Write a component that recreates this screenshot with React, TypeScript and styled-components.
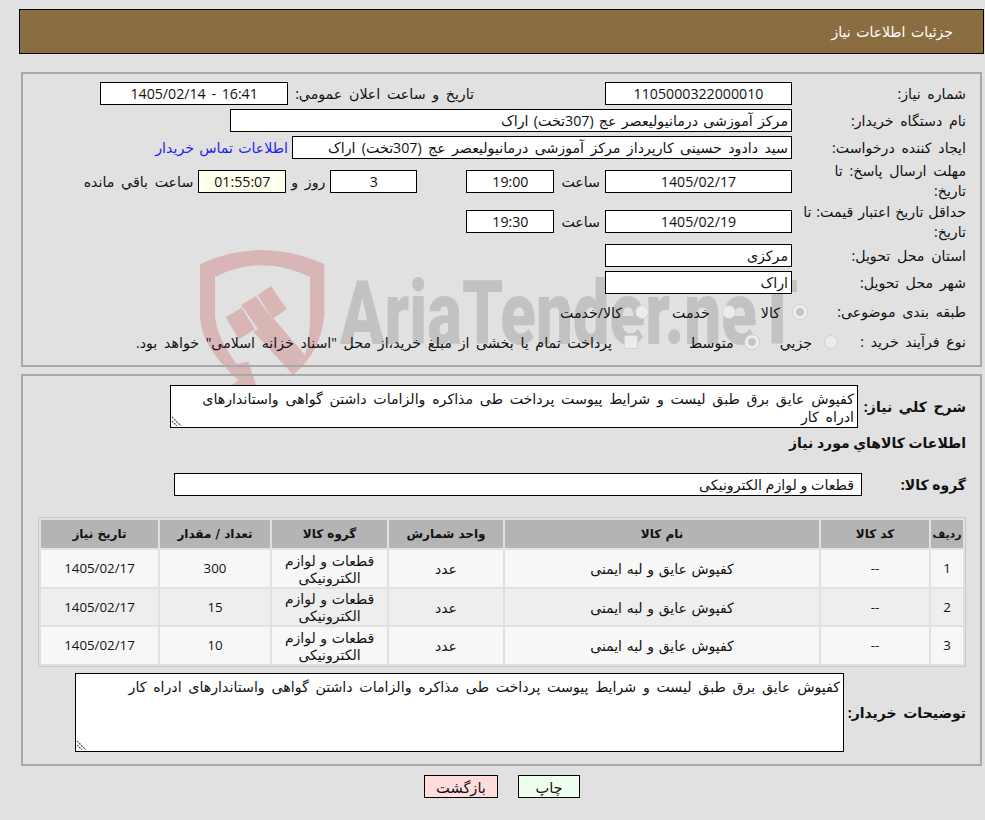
import styled, { createGlobalStyle } from "styled-components";

const GlobalStyle = createGlobalStyle`
  body {
    margin: 0;
    background-color: #e1e1e1;
    font-family: "Open Sans", "DejaVu Sans", Tahoma, sans-serif;
    font-size: 14.2px;
    color: #111;
  }
`;

const Page = styled.div`
  position: relative;
  direction: rtl;
  width: 985px;
  height: 820px;
  box-sizing: border-box;
  padding-top: 9px;
  overflow: hidden;
  word-spacing: 3px;
`;

const Watermark = styled.svg`
  position: absolute;
  left: 190px;
  top: 240px;
  width: 640px;
  height: 160px;
`;

const HeaderBar = styled.div`
  position: relative;
  box-sizing: border-box;
  height: 45px;
  margin-left: 19px;
  margin-right: 1px;
  padding-right: 30px;
  display: flex;
  align-items: center;
  background-color: #8b6d42;
  border: 1px solid #000;
  color: #fff;
  font-size: 14px;
  word-spacing: 2px;
`;

const Panel = styled.div<{ $top: number; $height: number }>`
  position: relative;
  box-sizing: border-box;
  height: ${({ $height }) => $height}px;
  margin: ${({ $top }) => $top}px 3px 0 21px;
  padding: 8px 14px 0 15px;
  border: 2px solid #a8a8a8;
`;

const Row = styled.div<{ $height: number; $gap?: number }>`
  display: flex;
  align-items: center;
  height: ${({ $height }) => $height}px;
  margin-bottom: ${({ $gap }) => $gap ?? 4}px;
`;

const Label = styled.div<{ $width?: number; $spread?: number }>`
  box-sizing: border-box;
  flex: none;
  width: ${({ $width }) => $width ?? 174}px;
  padding-left: 8px;
  line-height: 20px;
  word-spacing: ${({ $spread }) => $spread ?? 3}px;
`;

const Field = styled.div<{
  $width: number;
  $center?: boolean;
  $tint?: boolean;
  $after?: number;
  $spread?: number;
}>`
  flex: none;
  box-sizing: border-box;
  width: ${({ $width }) => $width}px;
  height: 23px;
  margin-left: ${({ $after }) => $after ?? 0}px;
  padding: 0 3px;
  line-height: 21px;
  text-align: ${({ $center }) => ($center ? "center" : "right")};
  word-spacing: ${({ $spread }) => $spread ?? 3}px;
  background-color: ${({ $tint }) => ($tint ? "#ffffee" : "#fff")};
  border: 1px solid #000;
  white-space: nowrap;
  overflow: hidden;
`;

const Text = styled.span<{ $after?: number; $before?: number }>`
  flex: none;
  margin-left: ${({ $after }) => $after ?? 0}px;
  margin-right: ${({ $before }) => $before ?? 0}px;
  white-space: nowrap;
`;

const ContactLink = styled.a`
  margin-right: 4px;
  color: #2222ee;
  text-decoration: none;
  white-space: nowrap;
  word-spacing: 1.5px;
`;

const Radio = styled.input.attrs({ type: "radio", disabled: true })<{ $after: number }>`
  appearance: none;
  flex: none;
  box-sizing: border-box;
  width: 14px;
  height: 14px;
  margin: 0 0 0 ${({ $after }) => $after}px;
  border-radius: 50%;
  border: 1px solid #d2d2d2;
  background-color: #ececec;
  &:checked {
    border: 3px solid #f0f0f0;
    outline: 1px solid #cfcfcf;
    background-color: #c4c4c4;
  }
`;

const Check = styled.input.attrs({ type: "checkbox", disabled: true })`
  appearance: none;
  flex: none;
  box-sizing: border-box;
  width: 14px;
  height: 14px;
  margin: 0 0 0 12px;
  border-radius: 2px;
  border: 1px solid #d2d2d2;
  background-color: #ececec;
`;

const BoldLabel = styled.div<{ $width: number; $spread?: number }>`
  flex: none;
  width: ${({ $width }) => $width}px;
  font-size: 14px;
  font-weight: 700;
  word-spacing: ${({ $spread }) => $spread ?? 3}px;
`;

const AreaBox = styled.div`
  position: relative;
  flex: none;
`;

const Area = styled.textarea<{ $width: number; $height: number }>`
  box-sizing: border-box;
  display: block;
  width: ${({ $width }) => $width}px;
  height: ${({ $height }) => $height}px;
  padding: 4px 3px 0;
  background-color: #fff;
  border: 1px solid #000;
  border-radius: 0;
  outline: none;
  resize: none;
  overflow: hidden;
  font-family: inherit;
  font-size: 14.2px;
  line-height: 18px;
  word-spacing: 3px;
  color: #111;
`;

const Grip = styled.svg`
  position: absolute;
  left: 2px;
  bottom: 2px;
  width: 10px;
  height: 10px;
`;

const SectionTitle = styled.div`
  height: 20px;
  margin: 5px 0 20px;
  font-size: 14px;
  font-weight: 700;
  line-height: 20px;
  word-spacing: 0;
`;

const ItemsTable = styled.table`
  table-layout: fixed;
  width: 928px;
  margin: 21px 0 6px;
  border: 1px solid #c8c8c8;
  border-spacing: 2px;
  border-collapse: separate;
`;

const Th = styled.th<{ $width: number }>`
  width: ${({ $width }) => $width}px;
  height: 28px;
  padding: 0;
  background-color: #b4b4b4;
  font-family: "DejaVu Sans", sans-serif;
  font-size: 12px;
  font-weight: 700;
  text-align: center;
  word-spacing: 0;
  &:first-child {
    font-size: 11px;
  }
`;

const Tr = styled.tr`
  &:nth-child(odd) td {
    background-color: #f7f7f7;
    height: 37px;
  }
  &:nth-child(even) td {
    background-color: #eeeeee;
    height: 36px;
  }
`;

const Td = styled.td<{ $num?: boolean }>`
  padding: 0 4px;
  font-size: ${({ $num }) => ($num ? 13.3 : 14)}px;
  line-height: 17px;
  text-align: center;
  word-spacing: 1px;
`;

const Actions = styled.div`
  display: flex;
  justify-content: center;
  gap: 20px;
  margin: 9px 0 0 19px;
`;

const Button = styled.button<{ $bg: string; $width: number }>`
  box-sizing: border-box;
  width: ${({ $width }) => $width}px;
  height: 23px;
  padding: 0;
  background-color: ${({ $bg }) => $bg};
  border: 1px solid #000;
  font-family: inherit;
  font-size: 14.6px;
  color: #111;
`;

const summary =
  "کفپوش عایق برق طبق لیست و شرایط پیوست پرداخت طی مذاکره والزامات داشتن گواهی واستاندارهای ادراه کار";

const items = [
  { row: "1", amount: "300" },
  { row: "2", amount: "15" },
  { row: "3", amount: "10" },
];

function ResizeGrip() {
  return (
    <Grip viewBox="0 0 10 10" aria-hidden="true">
      <path d="M0 1 L9 10 M0 5 L5 10" stroke="#555" strokeWidth="1.2" strokeDasharray="2 1" fill="none" />
    </Grip>
  );
}

function App() {
  return (
    <Page>
      <GlobalStyle />
      <Watermark viewBox="0 0 1920 480" aria-hidden="true">
        <g fill="#d8b6b6">
          <path d="M30,72 Q215,-12 403,72 L403,225 Q395,330 310,405 L345,345 Q360,300 360,225 L360,111 Q215,40 75,111 L75,225 Q78,290 140,372 L175,365 L200,440 L120,440 L145,420 Q30,320 30,225 Z" />
          <path d="M190,275 L250,235 L345,345 L310,405 Z" />
          <path d="M107,232 L155,203 L195,268 L147,298 Z" />
          <path d="M153,195 L197,168 L250,240 L205,268 Z" />
          <path d="M203,165 L243,138 L290,207 L248,237 Z" />
        </g>
        <text
          x="450"
          y="312"
          direction="ltr"
          fill="#c2c2c2"
          fontFamily="Roboto, sans-serif"
          fontSize="265"
          fontWeight="900"
          textLength="1374"
          lengthAdjust="spacingAndGlyphs"
          style={{ unicodeBidi: "bidi-override" }}
        >
          AriaTender.neT
        </text>
      </Watermark>

      <HeaderBar>جزئیات اطلاعات نیاز</HeaderBar>

      <Panel $top={18} $height={295}>
        <Row $height={23}>
          <Label>شماره نیاز:</Label>
          <Field $width={187} $center $after={131}>1105000322000010</Field>
          <Text $after={7}>تاریخ و ساعت اعلان عمومي:</Text>
          <Field $width={188} $center $spread={2}>16:41 - 1405/02/14</Field>
        </Row>
        <Row $height={23}>
          <Label>نام دستگاه خریدار:</Label>
          <Field $width={562} $spread={1.6}>مرکز آموزشی درمانیولیعصر عج (307تخت) اراک</Field>
        </Row>
        <Row $height={23}>
          <Label>ایجاد کننده درخواست:</Label>
          <Field $width={500} $spread={2.7}>سید دادود حسینی کارپرداز مرکز آموزشی درمانیولیعصر عج (307تخت) اراک</Field>
          <ContactLink>اطلاعات تماس خریدار</ContactLink>
        </Row>
        <Row $height={36} $gap={4}>
          <Label>مهلت ارسال پاسخ: تا تاریخ:</Label>
          <Field $width={187} $center>1405/02/17</Field>
          <Text $before={5} $after={7}>ساعت</Text>
          <Field $width={88} $center $after={49}>19:00</Field>
          <Field $width={87} $center>3</Field>
          <Text $before={5} $after={5}>روز و</Text>
          <Field $width={88} $center $tint>01:55:07</Field>
          <Text $before={5}>ساعت باقي مانده</Text>
        </Row>
        <Row $height={37}>
          <Label $spread={1.2}>حداقل تاریخ اعتبار قیمت: تا تاریخ:</Label>
          <Field $width={187} $center>1405/02/19</Field>
          <Text $before={5} $after={7}>ساعت</Text>
          <Field $width={88} $center>19:30</Field>
        </Row>
        <Row $height={23}>
          <Label>استان محل تحویل:</Label>
          <Field $width={187}>مرکزی</Field>
        </Row>
        <Row $height={23}>
          <Label>شهر محل تحویل:</Label>
          <Field $width={187}>اراک</Field>
        </Row>
        <Row $height={28} $gap={2}>
          <Label $width={159}>طبقه بندی موضوعی:</Label>
          <Radio $after={13} name="kind" defaultChecked />
          <Text $after={25}>كالا</Text>
          <Radio $after={12} name="kind" />
          <Text $after={23}>خدمت</Text>
          <Radio $after={13} name="kind" />
          <Text>كالا/خدمت</Text>
        </Row>
        <Row $height={28} $gap={0}>
          <Label $width={128}>نوع فرآیند خرید :</Label>
          <Radio $after={12} name="process" />
          <Text $after={21}>جزيي</Text>
          <Radio $after={11} name="process" defaultChecked />
          <Text $after={51}>متوسط</Text>
          <Check />
          <Text>پرداخت تمام یا بخشی از مبلغ خرید،از محل "اسناد خزانه اسلامی" خواهد بود.</Text>
        </Row>
      </Panel>

      <Panel $top={7} $height={392}>
        <Row $height={44} $gap={0}>
          <BoldLabel $width={108}>شرح كلي نياز:</BoldLabel>
          <AreaBox>
            <Area $width={688} $height={43} readOnly value={summary} />
            <ResizeGrip />
          </AreaBox>
        </Row>
        <SectionTitle>اطلاعات كالاهاي مورد نياز</SectionTitle>
        <Row $height={23} $gap={0}>
          <BoldLabel $width={104} $spread={0}>گروه كالا:</BoldLabel>
          <Field $width={688} $spread={0}>
            <Text $before={4}>قطعات و لوازم الکترونیکی</Text>
          </Field>
        </Row>
        <ItemsTable>
          <thead>
            <tr>
              <Th $width={32}>رديف</Th>
              <Th $width={108}>كد كالا</Th>
              <Th $width={314}>نام كالا</Th>
              <Th $width={114}>واحد شمارش</Th>
              <Th $width={115}>گروه كالا</Th>
              <Th $width={110}>تعداد / مقدار</Th>
              <Th $width={117}>تاريخ نياز</Th>
            </tr>
          </thead>
          <tbody>
            {items.map((item) => (
              <Tr key={item.row}>
                <Td $num>{item.row}</Td>
                <Td $num>--</Td>
                <Td>کفپوش عایق و لبه ایمنی</Td>
                <Td>عدد</Td>
                <Td>قطعات و لوازم الکترونیکی</Td>
                <Td $num>{item.amount}</Td>
                <Td $num>1405/02/17</Td>
              </Tr>
            ))}
          </tbody>
        </ItemsTable>
        <Row $height={79} $gap={0}>
          <BoldLabel $width={122}>توضیحات خریدار:</BoldLabel>
          <AreaBox>
            <Area $width={769} $height={79} readOnly value={summary} />
            <ResizeGrip />
          </AreaBox>
        </Row>
      </Panel>

      <Actions>
        <Button $bg="#eeffee" $width={62}>چاپ</Button>
        <Button $bg="#ffdddd" $width={74}>بازگشت</Button>
      </Actions>
    </Page>
  );
}

export default App;
